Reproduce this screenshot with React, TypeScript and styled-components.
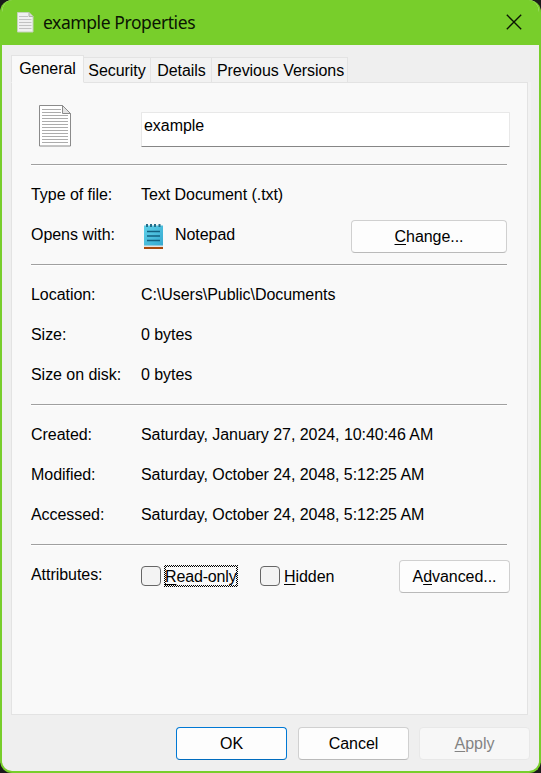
import React from "react";
import styled, { createGlobalStyle } from "styled-components";

const GlobalStyle = createGlobalStyle`
  * { box-sizing: border-box; }
  html, body { margin: 0; background: #1b1b1b; }
  body { overflow: hidden; }
  button, input { font: inherit; color: inherit; letter-spacing: inherit; margin: 0; }
`;

const Window = styled.main`
  width: 541px;
  height: 773px;
  display: flex;
  flex-direction: column;
  overflow: hidden;
  border: 2px solid #78ce2b;
  border-top: 0;
  border-radius: 12px;
  background: #efefef;
  color: #000;
  font: 16px/20px "Liberation Sans", Arial, sans-serif;
  letter-spacing: -0.05px;
`;

const TitleBar = styled.header`
  height: 45px;
  flex: none;
  display: flex;
  align-items: center;
  padding: 0 17px 0 15px;
  background: #78ce2b;
  svg { flex: none; }
`;

const Title = styled.h1`
  flex: 1;
  margin: -1px 0 0 8px;
  font: 400 17.5px/24px "Noto Sans", "Open Sans", sans-serif;
  letter-spacing: -0.42px;
  color: #0b1503;
`;

const CloseButton = styled.button`
  display: flex;
  padding: 0;
  margin-top: -1px;
  border: 0;
  background: none;
`;

const TabList = styled.nav`
  display: flex;
  align-items: flex-end;
  height: 38px;
  margin: 0 0 -1px 9px;
  flex: none;
`;

const Tab = styled.button<{ $width: number; $active?: boolean; $inset?: number }>`
  width: ${(p) => p.$width}px;
  height: ${(p) => (p.$active ? 28 : 26)}px;
  padding: ${(p) => (p.$active ? "0 0 1px" : "1px 0 0")};
  padding-left: ${(p) => p.$inset ?? 0}px;
  border: 1px solid #e3e3e3;
  border-left-width: ${(p) => (p.$active ? 1 : 0)}px;
  border-bottom-color: ${(p) => (p.$active ? "#f9f9f9" : "#e3e3e3")};
  background: ${(p) => (p.$active ? "#f9f9f9" : "#f2f2f2")};
  position: relative;
  white-space: nowrap;
`;

const Panel = styled.section`
  width: 517px;
  height: 633px;
  flex: none;
  margin-left: 9px;
  padding: 0 17px 0 19px;
  border: 1px solid #e3e3e3;
  background: #f9f9f9;
  box-shadow: 3px 0 #f2f2f2;
`;

const FileHeader = styled.div`
  display: flex;
  height: 81px;
  padding: 21px 0 0 8px;
  svg { flex: none; }
`;

const NameInput = styled.input`
  width: 369px;
  height: 35px;
  flex: none;
  margin: 8px 0 0 70px;
  padding: 0 2px 8px;
  border: 1px solid #e8e8e8;
  border-bottom-color: #868686;
  border-radius: 1px;
  background: #fff;
  outline: 0;
`;

const Group = styled.div`
  width: 476px;
  padding: 9px 0 10px;
  border-top: 1px solid #a0a0a0;
  box-shadow: inset 0 1px #fff;
`;

const Row = styled.div`
  display: grid;
  grid-template-columns: 110px 1fr auto;
  height: 40px;
  padding-top: 11px;
  white-space: nowrap;
`;

const Value = styled.div`
  display: flex;
  svg { margin-top: -1px; }
`;

const AppName = styled.span`
  margin-left: 11px;
`;

const Button = styled.button<{ $width: number; $kind?: "default" | "disabled" }>`
  width: ${(p) => p.$width}px;
  height: 33px;
  padding: 0;
  border: 1px solid
    ${(p) => (p.$kind === "default" ? "#0078d4" : p.$kind === "disabled" ? "#e8e8e8" : "#d0d0d0")};
  border-bottom-color: ${(p) =>
    p.$kind === "default" ? "#006cbe" : p.$kind === "disabled" ? "#e8e8e8" : "#bababa"};
  border-radius: 4px;
  background: ${(p) => (p.$kind === "disabled" ? "#f7f7f7" : "#fdfdfd")};
  color: ${(p) => (p.$kind === "disabled" ? "#838383" : "#000")};
`;

const ChangeButton = styled(Button)`
  margin-top: -5px;
`;

const AdvancedButton = styled(Button)`
  margin: -5px -3px 0 0;
`;

const ApplyButton = styled(Button)`
  margin-left: -1px;
`;

const Key = styled.span`
  text-decoration: underline;
  text-decoration-thickness: 1px;
  text-underline-offset: 2px;
  text-decoration-skip-ink: none;
`;

const CheckLabel = styled.label<{ $width: number }>`
  display: flex;
  width: ${(p) => p.$width}px;
  margin-top: 1px;
`;

const Checkbox = styled.input.attrs({ type: "checkbox" })`
  appearance: none;
  flex: none;
  width: 20px;
  height: 20px;
  border: 1px solid #666;
  border-radius: 4px;
  background: #f3f3f3;
`;

const CheckText = styled.span<{ $focused?: boolean }>`
  height: 22px;
  margin: -1px 0 0 3px;
  padding: 2px 1px;
  line-height: 20px;
  ${(p) =>
    p.$focused &&
    `
    width: 74px;
    letter-spacing: -0.15px;
    background:
      linear-gradient(#f9f9f9, #f9f9f9) center / calc(100% - 4px) calc(100% - 4px) no-repeat,
      repeating-conic-gradient(#000 0 25%, #f9f9f9 0 50%) 0 0 / 2px 2px;
  `}
`;

const Footer = styled.footer`
  display: flex;
  justify-content: flex-end;
  gap: 11px;
  padding: 12px 9px 0 0;
`;

const TitleIcon = () => (
  <svg width="18" height="21" viewBox="0 0 18 21">
    <path d="M.5.5h11.500l4 4v15.500H.5z" fill="#f0f0f0" stroke="#c5d2ba" />
    <path d="M2 4.500h9M2 7.500h12.500M2 10.500h12.500M2 13.500h12.500M2 16.500h12.500" stroke="#c2c2c2" />
    <path d="M12 .5v4h4" fill="#d7d7d7" stroke="#aeb4a7" />
  </svg>
);

const CloseIcon = () => (
  <svg width="16" height="16" viewBox="0 0 16 16">
    <path d="M.8.8l14.4 14.4M15.2.8L.8 15.2" stroke="#0b1503" strokeWidth="1.3" />
  </svg>
);

const DocumentIcon = () => (
  <svg width="32" height="43" viewBox="0 0 32 43">
    <path d="M.5 1.500h23l8 8v32.500H.5z" fill="#fff" stroke="#8b8b8b" />
    <path
      d="M3 5.500h19M3 8.500h19M3 11.500h26M3 14.500h26M3 17.500h26M3 20.500h26M3 23.500h26M3 26.500h26M3 29.500h26M3 32.500h26M3 35.500h26M3 38.500h26"
      stroke="#acacac"
    />
    <path d="M23.500 1.500v8h8z" fill="#e3e3e3" stroke="#8b8b8b" />
  </svg>
);

const NotepadIcon = () => (
  <svg width="23" height="28" viewBox="0 0 23 28">
    <defs>
      <linearGradient id="cover" x1="0" y1="0" x2="1" y2="1">
        <stop offset="0" stopColor="#5fd1e9" />
        <stop offset="1" stopColor="#36a9d0" />
      </linearGradient>
    </defs>
    <path d="M3 22h19v3H3z" fill="#a9480c" />
    <path d="M3 21h19v2H3z" fill="#e7e4e1" />
    <path d="M3 1.500h19V21.500H3z" fill="url(#cover)" />
    <path d="M6 0v3M10 0v3M14 0v3M18.500 0v3" stroke="#246d89" strokeWidth="2" />
    <path d="M6 7.500h13M6 12h13M6 16.500h13" stroke="#126080" strokeWidth="1.700" />
  </svg>
);

const tabs = [
  { name: "General", width: 73 },
  { name: "Security", width: 67 },
  { name: "Details", width: 61, inset: 1 },
  { name: "Previous Versions", width: 136, inset: 2 },
];

const storage = [
  ["Location:", "C:\\Users\\Public\\Documents"],
  ["Size:", "0 bytes"],
  ["Size on disk:", "0 bytes"],
];

const dates = [
  ["Created:", "Saturday, January 27, 2024, 10:40:46 AM"],
  ["Modified:", "Saturday, October 24, 2048, 5:12:25 AM"],
  ["Accessed:", "Saturday, October 24, 2048, 5:12:25 AM"],
];

const Details = ({ rows }: { rows: string[][] }) => (
  <Group>
    {rows.map(([label, value]) => (
      <Row key={label}>
        <span>{label}</span>
        <Value>{value}</Value>
      </Row>
    ))}
  </Group>
);

export default function App() {
  return (
    <>
      <GlobalStyle />
      <Window>
        <TitleBar>
          <TitleIcon />
          <Title>example Properties</Title>
          <CloseButton aria-label="Close">
            <CloseIcon />
          </CloseButton>
        </TitleBar>
        <TabList>
          {tabs.map((tab, i) => (
            <Tab key={tab.name} $width={tab.width} $inset={tab.inset} $active={i === 0}>
              {tab.name}
            </Tab>
          ))}
        </TabList>
        <Panel>
          <FileHeader>
            <DocumentIcon />
            <NameInput aria-label="File name" defaultValue="example" />
          </FileHeader>
          <Group>
            <Row>
              <span>Type of file:</span>
              <Value>Text Document (.txt)</Value>
            </Row>
            <Row>
              <span>Opens with:</span>
              <Value>
                <NotepadIcon />
                <AppName>Notepad</AppName>
              </Value>
              <ChangeButton $width={156}>
                <Key>C</Key>hange...
              </ChangeButton>
            </Row>
          </Group>
          <Details rows={storage} />
          <Details rows={dates} />
          <Group>
            <Row>
              <span>Attributes:</span>
              <Value>
                <CheckLabel $width={119}>
                  <Checkbox />
                  <CheckText $focused>
                    <Key>R</Key>ead-only
                  </CheckText>
                </CheckLabel>
                <CheckLabel $width={90}>
                  <Checkbox />
                  <CheckText>
                    <Key>H</Key>idden
                  </CheckText>
                </CheckLabel>
              </Value>
              <AdvancedButton $width={111}>
                A<Key>d</Key>vanced...
              </AdvancedButton>
            </Row>
          </Group>
        </Panel>
        <Footer>
          <Button $width={111} $kind="default">
            OK
          </Button>
          <Button $width={111}>Cancel</Button>
          <ApplyButton $width={111} $kind="disabled" disabled>
            <Key>A</Key>pply
          </ApplyButton>
        </Footer>
      </Window>
    </>
  );
}
